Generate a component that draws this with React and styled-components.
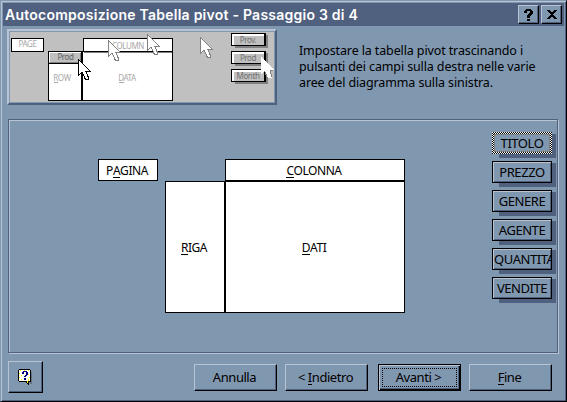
import React from "react";
import styled, { createGlobalStyle, css } from "styled-components";

const colors = {
  face: "#8097b0",
  light: "#b8c4d4",
  dark: "#50607f",
  black: "#000",
};

const GlobalStyle = createGlobalStyle`
  * {
    box-sizing: border-box;
  }

  body {
    margin: 0;
    background: ${colors.face};
    overflow: hidden;
  }

  button {
    margin: 0;
    padding: 0;
    color: #000;
    background: ${colors.face};
    font: inherit;
    letter-spacing: inherit;
  }

  u {
    text-decoration: none;
    box-shadow: 0 1px 0 #000;
    display: inline-block;
    line-height: 13px;
  }
`;

const Window = styled.div`
  display: flex;
  flex-direction: column;
  width: 567px;
  height: 402px;
  padding: 1px;
  background: ${colors.face};
  border: 1px solid;
  border-color: ${colors.face} ${colors.black} ${colors.black} ${colors.face};
  box-shadow: inset 1px 1px 0 ${colors.light}, inset -1px -1px 0 ${colors.dark};
  font-family: "Noto Sans", sans-serif;
  font-size: 12px;
  line-height: 16px;
  letter-spacing: -0.45px;
  color: #000;
  cursor: default;
`;

const TitleBar = styled.div`
  display: flex;
  flex: none;
  align-items: center;
  height: 23px;
  margin: 1px 1px 0;
  padding: 0 2px;
  background: ${colors.dark};
`;

const Title = styled.div`
  flex: 1;
  color: #fff;
  font-family: "Inter", sans-serif;
  font-size: 14px;
  font-weight: 600;
  letter-spacing: 0.24px;
  white-space: nowrap;
`;

const TitleButton = styled.button`
  display: flex;
  align-items: center;
  justify-content: center;
  width: 21px;
  height: 19px;
  margin-left: 2px;
  border: 1px solid;
  border-color: ${colors.light} ${colors.black} ${colors.black} ${colors.light};
  box-shadow: inset -1px -1px 0 ${colors.dark};
`;

const Intro = styled.div`
  display: flex;
  flex: none;
  height: 76px;
  margin: 3px 0 0 5px;
`;

const Preview = styled.div`
  width: 270px;
  height: 76px;
  border: 2px solid;
  border-color: ${colors.light} ${colors.dark} ${colors.dark} ${colors.light};

  svg {
    display: block;
  }
`;

const Description = styled.p`
  margin: 14px 0 0 22px;
  font-size: 12.5px;
  letter-spacing: -0.12px;
  white-space: nowrap;
`;

const Group = styled.div`
  display: flex;
  flex: none;
  width: 550px;
  height: 234px;
  margin: 14px 0 0 6px;
  border: 1px solid ${colors.dark};
  box-shadow: 1px 1px 0 ${colors.light}, inset 1px 1px 0 ${colors.light};
`;

const Diagram = styled.div`
  display: grid;
  grid-template-columns: 67px 60px 180px;
  grid-template-rows: 22px 132px;
  margin: 39px 0 0 89px;
`;

const Area = styled.div`
  display: flex;
  grid-column: ${(p) => p.$column};
  align-items: center;
  justify-content: center;
  width: ${(p) => (p.$width ? `${p.$width}px` : "auto")};
  padding: 2px 2px 0 0;
  background: #fff;
  border: 1px solid #000;
`;

const FieldList = styled.div`
  display: flex;
  flex-direction: column;
  gap: 7px;
  margin: 12px 0 0 87px;
`;

const FieldSlot = styled.div`
  position: relative;
  z-index: 0;
  width: 60px;
  height: 22px;

  &::before {
    content: "";
    position: absolute;
    z-index: -1;
    inset: 2px -4px -4px 7px;
    background: ${colors.dark};
  }
`;

const selectedField = css`
  border: 2px solid transparent;
  background:
    linear-gradient(${colors.face}, ${colors.face}) padding-box,
    repeating-conic-gradient(#000 0 25%, #fff 0 50%) 0 0 / 2px 2px border-box;
  box-shadow: none;
  outline: 1px dotted #80684f;
  outline-offset: -3px;
`;

const Field = styled.button`
  display: flex;
  align-items: center;
  justify-content: safe center;
  width: 60px;
  height: 22px;
  padding: 0 1px;
  border: 1px solid #000;
  box-shadow: inset 1px 1px 0 ${colors.light}, inset -1px -1px 0 ${colors.dark};
  font-size: 13px;
  overflow: hidden;
  white-space: nowrap;

  ${(p) => p.$selected && selectedField}
`;

const Footer = styled.div`
  display: flex;
  align-items: center;
  height: 32px;
  margin: 8px 13px 0 6px;
`;

const Button = styled.button`
  display: flex;
  align-items: center;
  justify-content: center;
  width: ${(p) => p.$width || 83}px;
  height: ${(p) => p.$height || 27}px;
  margin-left: ${(p) => p.$gap || 0}px;
  padding-right: 2px;
  border: 1px solid;
  border-color: ${colors.light} ${colors.black} ${colors.black} ${colors.light};
  box-shadow: inset -1px -1px 0 ${colors.dark};
  font-size: 13px;

  ${(p) =>
    p.$primary &&
    css`
      border-color: #000;
      box-shadow: inset 1px 1px 0 ${colors.light}, inset -1px -1px 0 #000, inset -2px -2px 0 ${colors.dark};
      outline: 1px dotted #000;
      outline-offset: -5px;
    `}
`;

const fields = ["TITOLO", "PREZZO", "GENERE", "AGENTE", "QUANTITA", "VENDITE"];

const Cursor = ({ x, y, color = "#808080" }) => (
  <path
    transform={`translate(${x} ${y})`}
    d="M.5.5v16l3.5-3.5 3.5 7.5h3v-2l-3-6.500h4.500z"
    fill="#fff"
    stroke={color}
  />
);

const MiniButton = ({ y, label }) => (
  <g>
    <rect x="235" y={y + 2} width="33" height="13" fill="#808080" />
    <rect x="231" y={y} width="35" height="13" fill="#000" />
    <rect x="232" y={y + 1} width="32" height="11" fill="#fff" />
    <rect x="234" y={y + 3} width="30" height="9" fill="#c0c0c0" />
    <text x="248" y={y + 10} fill="#707070">{label}</text>
  </g>
);

const PreviewDrawing = () => (
  <svg
    width="266"
    height="72"
    viewBox="9 31 266 72"
    shapeRendering="crispEdges"
    fontFamily="Noto Sans, sans-serif"
    fontSize="8"
    letterSpacing="-0.4"
    textAnchor="middle"
  >
    <rect x="9" y="31" width="266" height="72" fill={colors.face} />
    <rect x="10" y="32" width="264" height="70" fill="#c0c0c0" />
    <g fill="#fff" stroke="#000">
      <rect x="11.500" y="38.500" width="32" height="13" />
      <rect x="83.500" y="38.500" width="89" height="13" />
      <rect x="48.500" y="51.500" width="33" height="49" />
      <rect x="82.500" y="51.500" width="90" height="49" />
    </g>
    <path d="M84 52.500h88" stroke="#808080" />
    <rect x="49" y="52" width="32" height="11" fill="#c0c0c0" />
    <path d="M49 52.500h32M49.500 52v10" stroke="#fff" />
    <path d="M50 62.500h31M80.500 53v10" stroke="#808080" />
    <path d="M48 63.500h34" stroke="#000" />
    <g fill="#a8a8a8">
      <text x="27.500" y="47">PAGE</text>
      <text x="128" y="49">COLUMN</text>
      <text x="62" y="81">ROW</text>
      <text x="127" y="81">DATA</text>
    </g>
    <path d="M54 82.500h4M119 82.500h5" stroke="#a8a8a8" />
    <text x="65.500" y="60" fill="#606060">Prod</text>
    <MiniButton y={33} label="Prov." />
    <MiniButton y={51} label="Prod" />
    <MiniButton y={69} label="Month" />
    <Cursor x={108} y={40} />
    <Cursor x={147} y={34} />
    <Cursor x={200} y={37} />
    <Cursor x={261} y={57} color="#fff" />
    <path d="M264 71.500h1M265.500 72v3M266.500 75v3M270 70.500h3M270.500 71v3M271.500 74v3" stroke="#808080" />
    <Cursor x={78} y={59} color="#000" />
  </svg>
);

const HelpIcon = () => (
  <svg width="14" height="16" viewBox="0 0 14 16" shapeRendering="crispEdges">
    <path d="M2 15h10V3h2v12H2z" fill="#66717f" />
    <path d="M1 0h11v1h1v12h-2v3h-1v-1H9v-1H8v-1H1v-1H0V1h1z" fill="#000" />
    <path d="M1 1h11v11h-2v2H9v-2H1z" fill="#fff" />
    <path
      d="M2 1h1v1H2zM6 1h1v1H6zM10 1h1v1h-1zM1 4h1v1H1zM3 6h1v1H3zM1 8h1v1H1zM3 10h1v1H3zM10 5h1v1h-1zM11 8h1v1h-1zM10 10h1v2h-1zM9 12h1v2H9z"
      fill="#ff0"
    />
    <path d="M5 2h4v1H5zM4 3h2v2H4zM8 3h2v3H8zM7 6h2v1H7zM6 7h2v1H6zM6 9h2v2H6z" fill="#000080" />
  </svg>
);

const App = () => (
  <>
    <GlobalStyle />
    <Window>
      <TitleBar>
        <Title>Autocomposizione Tabella pivot - Passaggio 3 di 4</Title>
        <TitleButton aria-label="Help">
          <svg width="9" height="12" viewBox="0 0 9 12" shapeRendering="crispEdges">
            <path d="M2 0h5v1h1v1h1v3H8v1H7v1H6v2H3V6h1V5h1V4h1V2H3v2H0V2h1V1h1zM3 10h3v2H3z" />
          </svg>
        </TitleButton>
        <TitleButton aria-label="Close">
          <svg width="10" height="9" viewBox="0 0 10 9" shapeRendering="crispEdges">
            <path d="M0 0h3v1h1v1h2V1h1V0h3v1H9v1H8v1H7v1H6v1h1v1h1v1h1v1h1v1H7V8H6V7H4v1H3v1H0V8h1V7h1V6h1V5h1V4H3V3H2V2H1V1H0z" />
          </svg>
        </TitleButton>
      </TitleBar>
      <Intro>
        <Preview>
          <PreviewDrawing />
        </Preview>
        <Description>
          Impostare la tabella pivot trascinando i
          <br />
          pulsanti dei campi sulla destra nelle varie
          <br />
          aree del diagramma sulla sinistra.
        </Description>
      </Intro>
      <Group>
        <Diagram>
          <Area $column="1" $width={60}><span>P<u>A</u>GINA</span></Area>
          <Area $column="3"><span><u>C</u>OLONNA</span></Area>
          <Area $column="2"><span><u>R</u>IGA</span></Area>
          <Area $column="3"><span><u>D</u>ATI</span></Area>
        </Diagram>
        <FieldList>
          {fields.map((name, i) => (
            <FieldSlot key={name}>
              <Field $selected={i === 0}>{name}</Field>
            </FieldSlot>
          ))}
        </FieldList>
      </Group>
      <Footer>
        <Button $width={35} $height={32} aria-label="Help">
          <HelpIcon />
        </Button>
        <Button $gap={151}>Annulla</Button>
        <Button $gap={8}><span>&lt; <u>I</u>ndietro</span></Button>
        <Button $gap={10} $primary>Avanti &gt;</Button>
        <Button $gap={8}><span><u>F</u>ine</span></Button>
      </Footer>
    </Window>
  </>
);

export default App;
